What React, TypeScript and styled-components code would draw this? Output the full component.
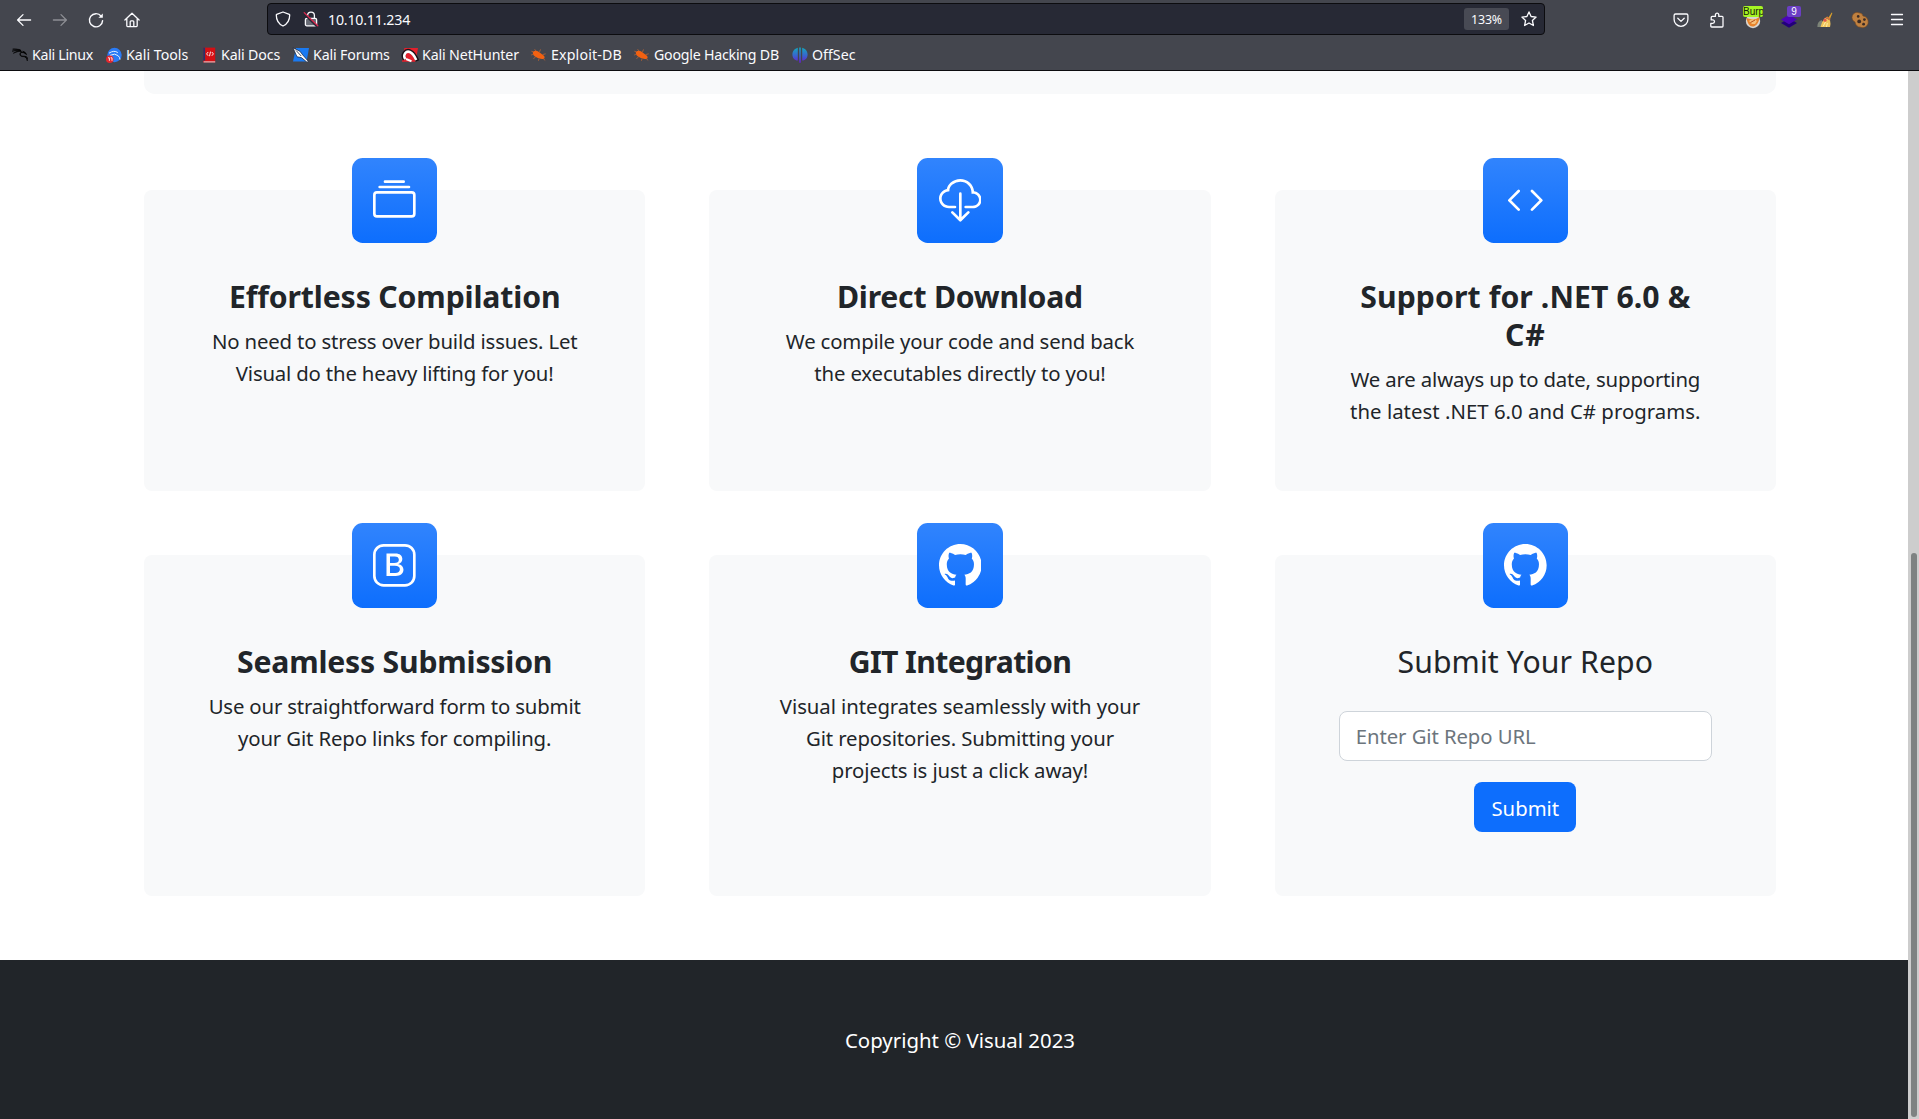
import React from 'react';
import styled, { createGlobalStyle } from 'styled-components';
import { BsBootstrap, BsCloudDownload, BsCode, BsCollection, BsGithub } from 'react-icons/bs';
import { SiKalilinux } from 'react-icons/si';

const GlobalStyle = createGlobalStyle`
  *, *::before, *::after { box-sizing: border-box; }
  body {
    margin: 0;
    overflow: hidden;
    font-family: "Noto Sans", "Open Sans", sans-serif;
    color: #212529;
    background: #fff;
  }
`;

const Browser = styled.div`
  height: 1119px;
  display: flex;
  flex-direction: column;
  overflow: hidden;
`;

/* ---------- Browser chrome ---------- */

const Chrome = styled.header`
  flex: none;
  height: 71px;
  background: #44464e;
  border-bottom: 1px solid #0c0c0f;
  color: #fbfbfe;
`;

const Toolbar = styled.div`
  height: 38px;
  display: flex;
  align-items: center;
  padding: 0 12px 0 14px;
`;

const NavButtons = styled.nav`
  display: flex;
  gap: 16px;
  width: 253px;
  padding-top: 1px;
`;

const ToolButton = styled.button<{ $dim?: boolean }>`
  position: relative;
  width: 20px;
  height: 20px;
  padding: 0;
  border: 0;
  background: none;
  display: grid;
  place-items: center;
  color: #fbfbfe;
  opacity: ${(p) => (p.$dim ? 0.4 : 1)};
`;

const UrlBar = styled.div`
  width: 1278px;
  height: 32px;
  display: flex;
  align-items: center;
  padding: 0 7px;
  border: 1px solid #0c0c0f;
  border-radius: 4px;
  background: #272935;
`;

const UrlIcons = styled.div`
  display: flex;
  gap: 12px;
  width: 53px;
`;

const Address = styled.span`
  flex: 1;
  padding-top: 1px;
  font-size: 14.2px;
  line-height: 20px;
  letter-spacing: -0.2px;
`;

const ZoomLevel = styled.span`
  width: 45px;
  height: 22px;
  margin-right: 12px;
  border-radius: 3px;
  background: #484a54;
  font-size: 12.4px;
  line-height: 23px;
  letter-spacing: -0.2px;
  text-align: center;
`;

const Extensions = styled.div`
  flex: 1;
  display: flex;
  justify-content: flex-end;
  gap: 16px;
  padding-top: 2px;
`;

const Badge = styled.span<{ $bg: string; $fg: string; $left: number; $width: number }>`
  position: absolute;
  top: -4px;
  left: ${(p) => p.$left}px;
  width: ${(p) => p.$width}px;
  height: 11px;
  overflow: hidden;
  border-radius: 2px;
  background: ${(p) => p.$bg};
  color: ${(p) => p.$fg};
  font-size: 10px;
  line-height: 11px;
  text-align: center;
  white-space: nowrap;
`;

const BookmarkBar = styled.div`
  height: 32px;
  display: flex;
  align-items: center;
  gap: 13px;
  padding: 1px 0 0 12px;
`;

const Bookmark = styled.a`
  display: flex;
  align-items: center;
  gap: 4px;
`;

const BookmarkLabel = styled.span<{ $width: number; $track: number }>`
  width: ${(p) => p.$width}px;
  padding-top: 1px;
  font-size: 14.2px;
  line-height: 20px;
  letter-spacing: ${(p) => p.$track}px;
  white-space: nowrap;
`;

const Glyph = styled.svg`
  display: block;
  flex: none;
  overflow: visible;
`;

const KaliDragon = styled(SiKalilinux)`
  width: 16px;
  height: 16px;
  color: #000;
  stroke: #000;
  stroke-width: 0.9;
`;

/* ---------- Web page ---------- */

const Viewport = styled.main`
  position: relative;
  flex: 1;
  min-height: 0;
  display: flex;
  flex-direction: column;
`;

const Hero = styled.div`
  flex: none;
  width: 1632px;
  height: 22.7px;
  margin-left: 144px;
  border-radius: 0 0 10.67px 10.67px;
  background: #f8f9fa;
`;

const Features = styled.section`
  flex: none;
  width: 1632px;
  margin-left: 144px;
  padding: 96.3px 0 64px;
  display: grid;
  grid-template-columns: repeat(3, 1fr);
  grid-template-rows: 301px 341px;
  gap: 64px;
`;

const Card = styled.article`
  display: flex;
  flex-direction: column;
  align-items: center;
  padding: 0 60px;
  border-radius: 8px;
  background: #f8f9fa;
  text-align: center;
`;

const Tile = styled.div`
  flex: none;
  width: 85.33px;
  height: 85.33px;
  margin: -32px 0 32px;
  display: grid;
  place-items: center;
  border-radius: 10.67px;
  background: linear-gradient(180deg, #3184fd, #0d6efd);
  color: #fff;
  font-size: 42.67px;

  svg { display: block; }
`;

const Title = styled.h2<{ $light?: boolean }>`
  margin: 0 0 8.67px;
  padding-top: 2.4px;
  font-size: 30.2px;
  font-weight: ${(p) => (p.$light ? 400 : 700)};
  line-height: 38.4px;
`;

const Text = styled.p`
  margin: 0;
  font-size: 20.35px;
  line-height: 32px;
`;

const Line = styled.span<{ $track: number }>`
  display: block;
  letter-spacing: ${(p) => p.$track}px;
  white-space: nowrap;
`;

const RepoForm = styled.form`
  width: 373px;
  margin-top: 21px;
  display: flex;
  flex-direction: column;
  align-items: center;
  gap: 21.3px;
`;

const RepoInput = styled.input`
  width: 100%;
  height: 50px;
  padding: 1px 16px 0;
  border: 1px solid #ced4da;
  border-radius: 8px;
  background: #fff;
  font: 20.3px/32px "Noto Sans", sans-serif;
  letter-spacing: -0.07px;

  &::placeholder { color: #6c757d; opacity: 1; }
`;

const SubmitButton = styled.button`
  width: 102px;
  height: 50px;
  padding: 1px 0 0;
  border: 0;
  border-radius: 8px;
  background: #0d6efd;
  color: #fff;
  font: 20.3px/32px "Noto Sans", sans-serif;
`;

const Footer = styled.footer`
  flex: 1;
  padding: 64px 0 0 1px;
  background: #212529;
  color: #fff;
  font-size: 20.4px;
  line-height: 32px;
  text-align: center;
`;

const Scrollbar = styled.div`
  position: absolute;
  top: 0;
  right: 0;
  bottom: 0;
  width: 11px;
  padding: 482px 2px 2px 3px;
  background: #cdcdcd;
`;

const Thumb = styled.div`
  height: 100%;
  border-radius: 3px;
  background: #7e8282;
`;

/* ---------- Icons ---------- */

type IconProps = { size?: number; children: React.ReactNode; width?: number };

const Outline = ({ size = 16, width = 1.3, children }: IconProps) => (
  <Glyph width={size} height={size} viewBox="0 0 16 16" fill="none" stroke="currentColor" strokeWidth={width} strokeLinecap="round" strokeLinejoin="round">
    {children}
  </Glyph>
);

const Solid = ({ size = 16, children }: IconProps) => (
  <Glyph width={size} height={size} viewBox="0 0 16 16">{children}</Glyph>
);

const BackIcon = () => <Outline><path d="M14.6 8H1.8M7 2.6 1.6 8 7 13.4" /></Outline>;
const ForwardIcon = () => <Outline><path d="M1.4 8h12.8M9 2.6 14.4 8 9 13.4" /></Outline>;
const ReloadIcon = () => (
  <Outline width={1.4}>
    <path d="M13.2 4.2A6.6 6.6 0 1 0 14.6 8.6" />
    <path d="M14.8 1.4v4.4h-4.4z" fill="currentColor" stroke="none" />
  </Outline>
);
const HomeIcon = () => (
  <Outline>
    <path d="M.9 8 8 1.2 15.1 8M2.8 6.6v7.2q0 .8.8.8h8.8q.8 0 .8-.8V6.6" />
    <path d="M6.2 14.4V9.8q0-.9.9-.9h1.8q.9 0 .9.9v4.6" />
  </Outline>
);
const ShieldIcon = () => (
  <Outline><path d="M8 1 14.3 3.4q.4.2.4.6C14.7 9.4 12 13.2 8 15 4 13.2 1.3 9.4 1.3 4q0-.4.4-.6z" /></Outline>
);
const LockIcon = () => (
  <Outline>
    <rect x="2.4" y="7.4" width="11.2" height="7.4" rx="1.4" fill="#686b75" />
    <path d="M4.6 7V4.6a3.4 3.4 0 0 1 6.8 0V7" />
    <path d="M2 3.6 13.4 14.6" stroke="#272935" strokeWidth="2.2" />
    <path d="M1.2 1.6 14.8 14.8" stroke="#e22850" strokeWidth="1.3" />
  </Outline>
);
const StarIcon = () => (
  <Outline><path d="m8 .9 2.1 4.6 5 .6-3.7 3.4 1 5L8 12l-4.4 2.5 1-5L.9 6.1l5-.6z" /></Outline>
);
const PocketIcon = () => (
  <Outline>
    <path d="M2.5 2h11q1.4 0 1.4 1.4v4a6.9 6.9 0 0 1-13.8 0v-4Q1.1 2 2.5 2z" />
    <path d="m4.8 6.3 3.2 3.1 3.2-3.1" />
  </Outline>
);
const PuzzleIcon = () => (
  <Outline>
    <path d="M2.7 15h10.400q.9 0 .9-.9V5.300q0-.9-.9-.9H9.800V2.900a1.700 1.700 0 0 0-3.400 0v1.500H3.200q-1 0-1 1v2.500h1.600a1.700 1.700 0 0 1 0 3.400H1.800v2.900q0 .8.9.8z" />
  </Outline>
);
const MenuIcon = () => <Outline width={1.3}><path d="M2.5 2.5h11M2.5 7.5h11M2.5 12.5h11" /></Outline>;

const FoxIcon = () => (
  <Solid>
    <circle cx="8" cy="9" r="7.2" fill="#d9d5cf" />
    <path d="M1.5 6C3 14 6 14.5 8 14.5S14 12 14.5 5L11 7H5z" fill="#e8842c" />
    <path d="M4 9q4-4 8 0l-2 3H7z" fill="#f7c079" />
    <path d="M5.500 10.500 10 8" stroke="#b34a18" strokeWidth="1" />
  </Solid>
);
const LayersIcon = () => (
  <Solid>
    <path d="m8 6.400 8 4.600-8 4.800L0 11z" fill="#23007a" />
    <path d="m8 2.800 8 4.600-8 4.800L0 7.400z" fill="#4b05b8" />
  </Solid>
);
const BroomIcon = () => (
  <Solid>
    <path d="M.4 15Q0 10 4.500 8l3.500 7z" fill="#7d8478" />
    <path d="M3.500 15Q5 9 8 5.800l5 2.400Q14 12 13 15z" fill="#f2c55c" />
    <path d="m8.400 5.600 2-1.200 3 2-.4 2z" fill="#d9773a" />
    <path d="m11.500 5.500 3.200-5 .7.5-2.200 5.400z" fill="#d9a02c" />
    <circle cx="8" cy="8.200" r="1.600" fill="#e2564c" />
    <path d="M6 14.500 8.500 10M9.500 15l.8-4" stroke="#fff0a8" />
  </Solid>
);
const CookieIcon = () => (
  <Solid>
    <path d="M6 .8a4 4 0 0 1 4 3.200 5.700 5.700 0 0 1 5.200 6.200A5.500 5.500 0 0 1 7.500 15.200 5.600 5.600 0 0 1 2 10 4.900 4.900 0 0 1 6 .8z" fill="#c08140" stroke="#76471f" strokeWidth=".6" />
    <circle cx="5.200" cy="4.400" r="1.300" fill="#3b2b25" />
    <circle cx="6.200" cy="9.400" r="1.900" fill="#3b2b25" />
    <circle cx="11.400" cy="7.600" r="1.400" fill="#3b2b25" />
    <circle cx="10.600" cy="12.200" r="1.400" fill="#3b2b25" />
  </Solid>
);

const KaliToolsIcon = () => (
  <Solid>
    <circle cx="8.500" cy="8" r="7.200" fill="#2a7bf6" />
    <path d="M3 6.200q5-3.400 8.800-.6M4 8.400q5-2.600 8 .2 2 1.800 2 4" fill="none" stroke="#e8f1ff" strokeWidth="1" />
    <circle cx="3.800" cy="12.200" r="3.800" fill="#e3262d" />
    <path d="M2 10.800h1.400v3M4.600 10.800H6v3" fill="none" stroke="#fff" strokeWidth=".9" />
  </Solid>
);
const KaliDocsIcon = () => (
  <Solid>
    <path d="M2.200.6h12v14.800h-12z" fill="#d40f14" />
    <path d="M2.200.6h1.900v13H2.200z" fill="#26356b" />
    <path d="M2.600 14.400h11.600v1H2.600z" fill="#e9d8d8" />
    <path d="M7.200 5 5.600 6.900l1.600 1.900M10.800 5l1.600 1.900-1.600 1.900M9.500 4.600l-1 4.600" fill="none" stroke="#fff" strokeWidth=".9" />
  </Solid>
);
const KaliForumsIcon = () => (
  <Solid>
    <path d="M3 1h13l-2.400 13.500H0z" fill="#1a7af2" />
    <path d="M0 .8 6.800 4.200l3 3.800 5.600 6.400-1.400.8-5.600-4.600L4 9.800z" fill="#fff" stroke="#14203a" strokeWidth=".7" />
    <path d="M3 3.400 8.200 9" stroke="#14203a" strokeWidth=".8" />
  </Solid>
);
const NetHunterIcon = () => (
  <Solid>
    <path d="M2.400 1H16l-2.400 13.800H0z" fill="#e3202c" />
    <path d="M2.600 12.600C-.6 7 4 2.600 8 4.200q4.600 2 7.400 9.800" fill="none" stroke="#191319" strokeWidth="3.800" />
    <path d="M3.200 12.200C.4 7.400 4.400 3.600 7.800 5q3.600 1.600 6.400 8" fill="none" stroke="#fff" strokeWidth="2.500" />
    <path d="m4 12 5.500 2.200" stroke="#fff" strokeWidth="2" />
  </Solid>
);
const BugIcon = () => (
  <Solid>
    <path d="M2 4.800q2.500-2.400 6 .2l5.200 4q1.200 2.600-1.200 3-4.400.4-8-2.400Q1.200 7.400 2 4.800z" fill="#f26111" />
    <path d="M5 4 3.600 2.200M8.500 5l1-2.600M11.500 7.600l3.200-.8M1.800 7.400.2 8M4.600 10l-2.200 1.600M8 11.800l-.6 2M12.200 11.600l2 1.800M2.200 4.800l-1.800-.6" stroke="#b96333" strokeWidth=".8" />
  </Solid>
);
const OffSecIcon = () => (
  <Solid>
    <defs>
      <linearGradient id="offsec" x1="0" y1="0" x2="0" y2="1">
        <stop offset="0" stopColor="#12a9bd" />
        <stop offset=".55" stopColor="#3a62cf" />
        <stop offset="1" stopColor="#6a1bd0" />
      </linearGradient>
    </defs>
    <path d="M5.800.8v12.800C2.600 13.600.4 11 .4 7.600S2.600 1.600 5.800.8zM10.200.8v12.800c3.200 0 5.400-2.600 5.400-6s-2.200-6-5.400-6.800zM7.200.4h1.600v15.400H7.200z" fill="url(#offsec)" />
  </Solid>
);

/* ---------- Data ---------- */

const bookmarks = [
  { label: 'Kali Linux', width: 61, track: -0.29, icon: <KaliDragon /> },
  { label: 'Kali Tools', width: 62, track: 0, icon: <KaliToolsIcon /> },
  { label: 'Kali Docs', width: 59, track: -0.14, icon: <KaliDocsIcon /> },
  { label: 'Kali Forums', width: 76, track: -0.15, icon: <KaliForumsIcon /> },
  { label: 'Kali NetHunter', width: 96, track: -0.13, icon: <NetHunterIcon /> },
  { label: 'Exploit-DB', width: 70, track: 0.16, icon: <BugIcon /> },
  { label: 'Google Hacking DB', width: 125, track: -0.23, icon: <BugIcon /> },
  { label: 'OffSec', width: 44, track: 0, icon: <OffSecIcon /> },
];

type Row = [text: string, track: number];

const features: { icon: React.ReactNode; title: Row[]; text: Row[] }[] = [
  {
    icon: <BsCollection />,
    title: [['Effortless Compilation', -0.13]],
    text: [['No need to stress over build issues. Let', -0.17], ['Visual do the heavy lifting for you!', -0.18]],
  },
  {
    icon: <BsCloudDownload />,
    title: [['Direct Download', -0.23]],
    text: [['We compile your code and send back', -0.18], ['the executables directly to you!', -0.14]],
  },
  {
    icon: <BsCode />,
    title: [['Support for .NET 6.0 &', 0.08], ['C#', 1]],
    text: [['We are always up to date, supporting', -0.16], ['the latest .NET 6.0 and C# programs.', 0.03]],
  },
  {
    icon: <BsBootstrap />,
    title: [['Seamless Submission', -0.2]],
    text: [['Use our straightforward form to submit', -0.17], ['your Git Repo links for compiling.', -0.13]],
  },
  {
    icon: <BsGithub />,
    title: [['GIT Integration', -0.64]],
    text: [
      ['Visual integrates seamlessly with your', -0.07],
      ['Git repositories. Submitting your', -0.11],
      ['projects is just a click away!', -0.11],
    ],
  },
];

const Lines = ({ rows }: { rows: Row[] }) => (
  <>
    {rows.map(([text, track]) => (
      <Line key={text} $track={track}>{text}</Line>
    ))}
  </>
);

export default function App() {
  return (
    <Browser>
      <GlobalStyle />
      <Chrome>
        <Toolbar>
          <NavButtons>
            <ToolButton><BackIcon /></ToolButton>
            <ToolButton $dim><ForwardIcon /></ToolButton>
            <ToolButton><ReloadIcon /></ToolButton>
            <ToolButton><HomeIcon /></ToolButton>
          </NavButtons>
          <UrlBar>
            <UrlIcons><ShieldIcon /><LockIcon /></UrlIcons>
            <Address>10.10.11.234</Address>
            <ZoomLevel>133%</ZoomLevel>
            <StarIcon />
          </UrlBar>
          <Extensions>
            <ToolButton><PocketIcon /></ToolButton>
            <ToolButton><PuzzleIcon /></ToolButton>
            <ToolButton>
              <FoxIcon />
              <Badge $bg="#a6f523" $fg="#17210a" $left={0} $width={20}>Burp</Badge>
            </ToolButton>
            <ToolButton>
              <LayersIcon />
              <Badge $bg="#6b3fc4" $fg="#fff" $left={8} $width={14}>9</Badge>
            </ToolButton>
            <ToolButton><BroomIcon /></ToolButton>
            <ToolButton><CookieIcon /></ToolButton>
            <ToolButton><MenuIcon /></ToolButton>
          </Extensions>
        </Toolbar>
        <BookmarkBar>
          {bookmarks.map((b) => (
            <Bookmark key={b.label}>
              {b.icon}
              <BookmarkLabel $width={b.width} $track={b.track}>{b.label}</BookmarkLabel>
            </Bookmark>
          ))}
        </BookmarkBar>
      </Chrome>
      <Viewport>
        <Hero />
        <Features>
          {features.map((f) => (
            <Card key={f.title[0][0]}>
              <Tile>{f.icon}</Tile>
              <Title><Lines rows={f.title} /></Title>
              <Text><Lines rows={f.text} /></Text>
            </Card>
          ))}
          <Card>
            <Tile><BsGithub /></Tile>
            <Title $light><Line $track={0.1}>Submit Your Repo</Line></Title>
            <RepoForm>
              <RepoInput placeholder="Enter Git Repo URL" />
              <SubmitButton type="button">Submit</SubmitButton>
            </RepoForm>
          </Card>
        </Features>
        <Footer>Copyright © Visual 2023</Footer>
        <Scrollbar><Thumb /></Scrollbar>
      </Viewport>
    </Browser>
  );
}
